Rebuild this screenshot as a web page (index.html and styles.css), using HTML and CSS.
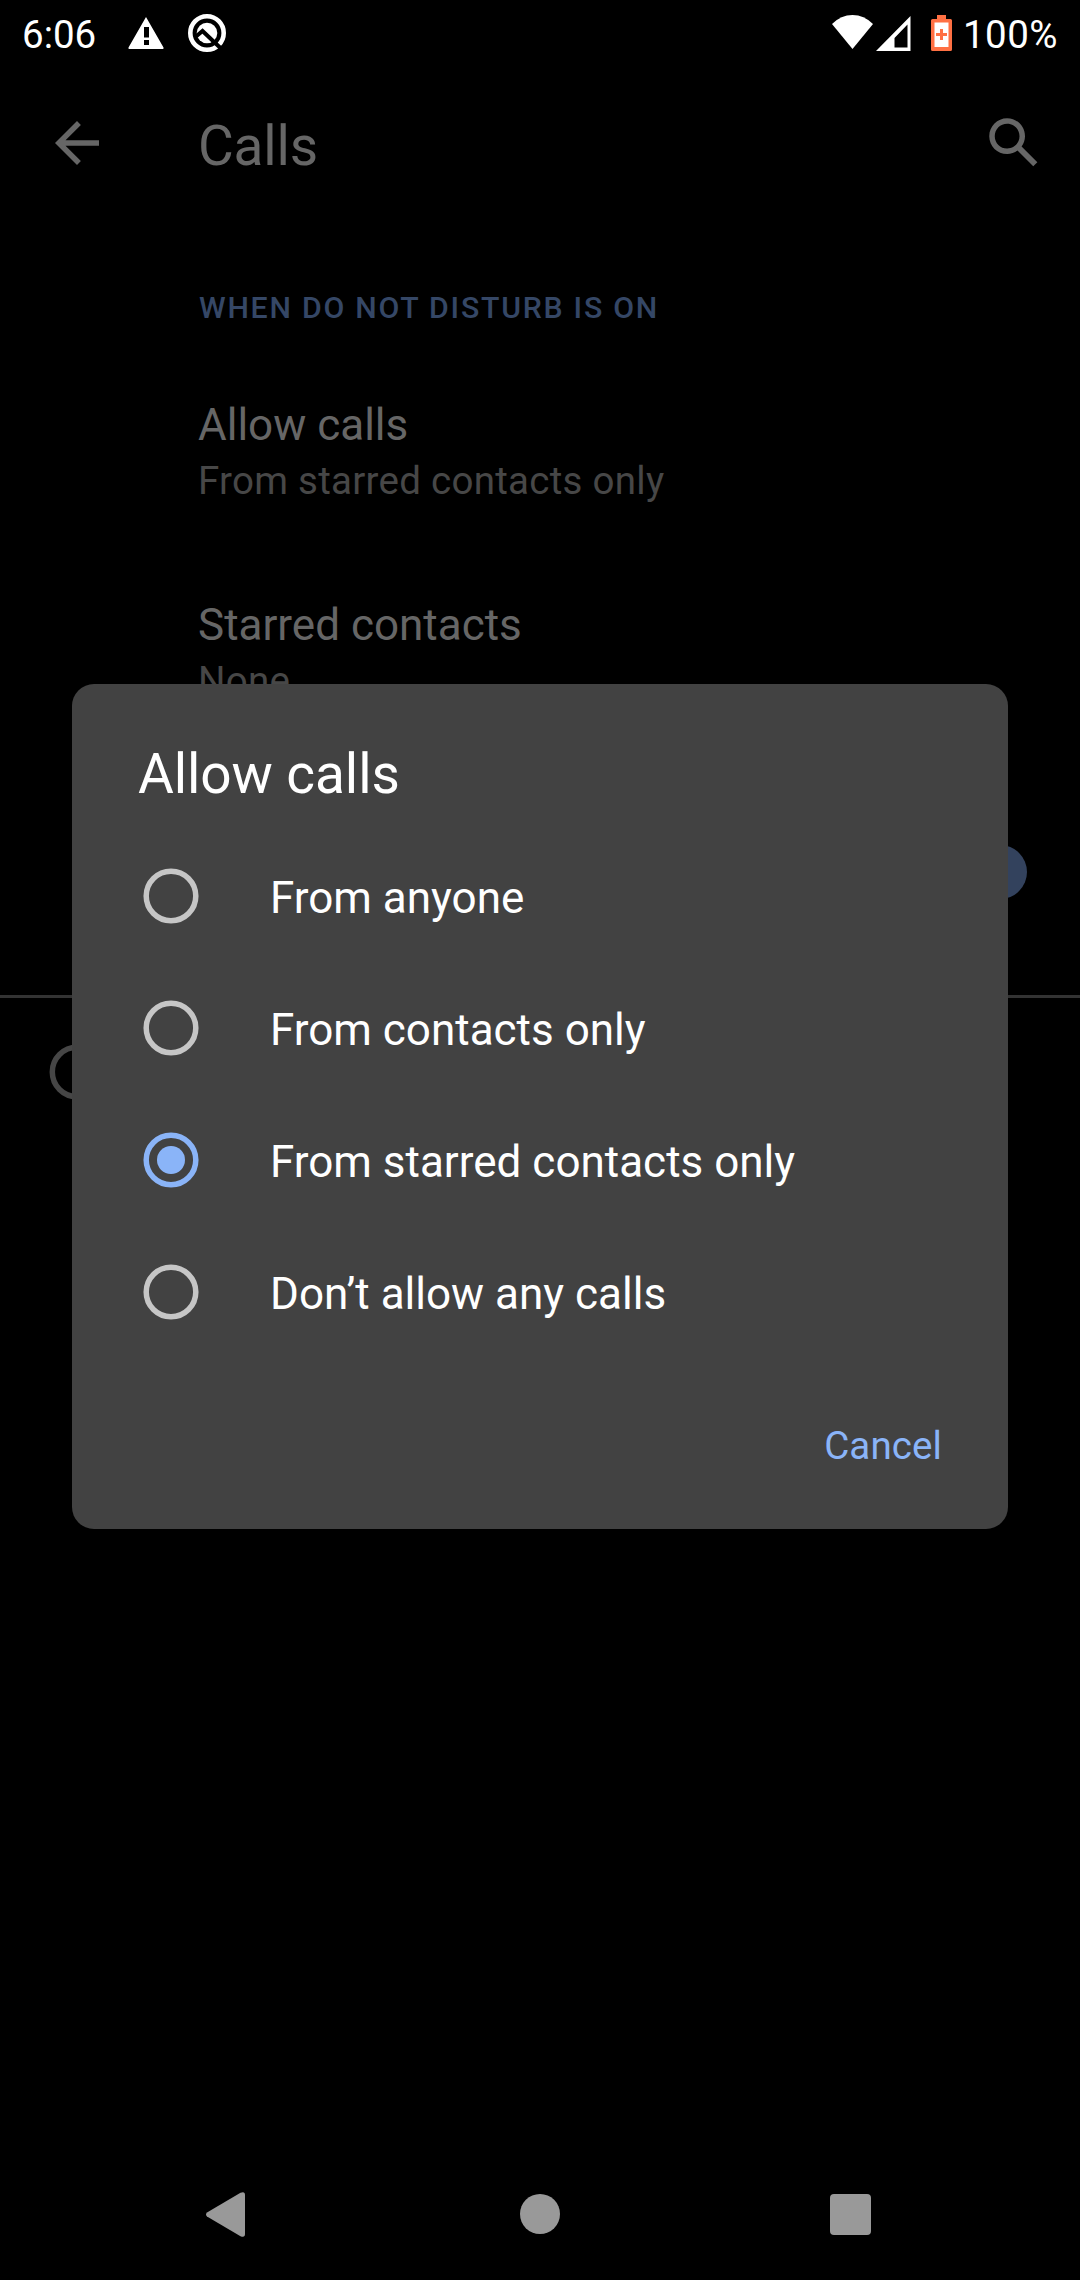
FILE: index.html
```html
<!DOCTYPE html>
<html lang="en">
<head>
<meta charset="utf-8">
<title>Calls</title>
<link rel="stylesheet" href="styles.css">
</head>
<body>
<div class="screen">
  <header class="status-bar">
    <span class="clock">6:06</span>
    <svg class="icon-warning" viewBox="0 0 36 32"><path fill="#fff" fill-rule="evenodd" d="M18 0 35.500 30.500Q36 32 34.500 32H1.500Q0 32 .5 30.500ZM16 10v10.500h5V10ZM16 23v5h5v-5Z"/></svg>
    <svg class="icon-q" viewBox="0 0 38 38">
      <circle cx="19" cy="19" r="16.700" fill="none" stroke="#fff" stroke-width="4.600"/>
      <circle cx="19" cy="19" r="10.300" fill="#fff"/>
      <path d="M8 22.500 14.500 17 33 34.500" fill="none" stroke="#000" stroke-width="4"/>
    </svg>
    <span class="spacer"></span>
    <svg class="icon-wifi" viewBox="0 0 41 34"><path fill="#fff" d="M0 9Q9 0 20.500 0T41 9L20.500 34Z"/></svg>
    <svg class="icon-signal" viewBox="0 0 35 35"><path fill="#fff" fill-rule="evenodd" d="M34.500 0V35H0ZM31.500 8.500 18.500 22V31.500H31.500Z"/></svg>
    <svg class="icon-battery" viewBox="0 0 21 36"><path fill="#ff7043" d="M6 0h9v4h4.500Q21 4 21 5.500V34.500Q21 36 19.500 36H1.500Q0 36 0 34.500V5.500Q0 4 1.500 4H6Z"/><path fill="#fff" d="M3.500 7.500h14v24.500h-14Z"/><path fill="#ff7043" d="M9 14h3v4h4v3h-4v4H9v-4H5v-3h4Z"/></svg>
    <span class="battery-level">100%</span>
  </header>

  <nav class="app-bar">
    <svg class="icon-action" viewBox="0 0 24 24"><path fill="#666" d="M20 11H7.830l5.590-5.590L12 4l-8 8 8 8 1.410-1.410L7.830 13H20v-2z"/></svg>
    <h1 class="page-title">Calls</h1>
    <svg class="icon-action" viewBox="0 0 24 24"><path fill="#666" d="M20.490 19l-5.730-5.730C15.530 12.200 16 10.910 16 9.500 16 5.910 13.090 3 9.500 3S3 5.910 3 9.500 5.910 16 9.500 16c1.410 0 2.700-.47 3.770-1.240L19 20.490 20.490 19zM5 9.500C5 7.010 7.010 5 9.500 5S14 7.010 14 9.500 11.990 14 9.500 14 5 11.990 5 9.500z"/></svg>
  </nav>

  <main class="settings">
    <h2 class="category">WHEN DO NOT DISTURB IS ON</h2>
    <section class="preference">
      <div class="preference-title">Allow calls</div>
      <div class="preference-summary">From starred contacts only</div>
    </section>
    <section class="preference">
      <div class="preference-title">Starred contacts</div>
      <div class="preference-summary">None</div>
    </section>
    <div class="switch-row"><span class="switch-thumb"></span></div>
    <div class="footer-row"><svg class="footer-icon" viewBox="0 0 56 56"><circle cx="28" cy="28" r="24.700"/></svg></div>
  </main>

  <footer class="nav-bar">
    <svg class="nav-back" viewBox="0 0 39 45"><path fill="#999" d="M1 20.500 34.500 .8Q39 -1 39 3V42Q39 46 34.500 44.200L1 24.500Q-1 22.500 1 20.500Z"/></svg>
    <span class="nav-home"></span>
    <span class="nav-recents"></span>
  </footer>

  <div class="dialog" role="dialog">
    <h2 class="dialog-title">Allow calls</h2>
    <div class="option"><svg class="radio" viewBox="0 0 56 56"><circle class="radio-ring" cx="28" cy="28" r="24.800"/></svg><span class="option-label">From anyone</span></div>
    <div class="option"><svg class="radio" viewBox="0 0 56 56"><circle class="radio-ring" cx="28" cy="28" r="24.800"/></svg><span class="option-label">From contacts only</span></div>
    <div class="option"><svg class="radio radio-checked" viewBox="0 0 56 56"><circle class="radio-ring" cx="28" cy="28" r="24.800"/><circle class="radio-dot" cx="28" cy="28" r="14"/></svg><span class="option-label">From starred contacts only</span></div>
    <div class="option"><svg class="radio" viewBox="0 0 56 56"><circle class="radio-ring" cx="28" cy="28" r="24.800"/></svg><span class="option-label">Don’t allow any calls</span></div>
    <div class="dialog-actions"><span class="dialog-button">Cancel</span></div>
  </div>
</div>
</body>
</html>
```
FILE: styles.css
```css
* { box-sizing: border-box; }

body {
  margin: 0;
  background: #000;
  font-family: Roboto, sans-serif;
}

h1, h2 { margin: 0; font-weight: 400; }

svg { display: block; flex: none; }

.screen {
  position: relative;
  display: flex;
  flex-direction: column;
  width: 1080px;
  height: 2280px;
  overflow: hidden;
  background: #000;
}

/* Status bar */
.status-bar {
  display: flex;
  align-items: center;
  height: 66px;
  padding: 0 22px;
  color: #fff;
  font-size: 38.5px;
  line-height: 48px;
}

.clock { width: 106px; padding-top: 4px; }
.icon-warning { width: 36px; height: 32px; }
.icon-q { width: 38px; height: 38px; margin-left: 24px; }
.spacer { flex: 1; }
.icon-wifi { width: 41px; height: 34px; margin: 0 3px 2px 0; }
.icon-signal { width: 35px; height: 35px; margin-right: 20px; }
.icon-battery { width: 21px; height: 36px; margin-right: 11px; }
.battery-level { padding-top: 4px; letter-spacing: 0.5px; }

/* App bar */
.app-bar {
  display: flex;
  align-items: center;
  height: 154px;
  padding: 0 33px 0 44px;
}

.icon-action { width: 66px; height: 66px; }

.page-title {
  flex: 1;
  padding: 6px 0 0 88px;
  color: #666;
  font-size: 55px;
  line-height: 66px;
  letter-spacing: -0.2px;
}

/* Settings list */
.settings { flex: 1; padding-top: 66px; }

.category {
  padding-left: 199px;
  color: #354766;
  font-size: 30.25px;
  font-weight: 500;
  line-height: 44px;
  letter-spacing: 1.75px;
}

.preference { height: 200px; padding: 65px 0 0 198px; }

.preference-title { color: #666; font-size: 44px; line-height: 60px; }

.preference-summary {
  color: #474747;
  font-size: 38.5px;
  line-height: 52px;
  letter-spacing: 0.27px;
}

.switch-row {
  display: flex;
  justify-content: flex-end;
  height: 268px;
  padding: 115px 53px 0 0;
  border-bottom: 3px solid #333;
}

.switch-thumb {
  width: 54px;
  height: 54px;
  border-radius: 50%;
  background: #33425d;
}

.footer-row { padding: 46px 0 0 49px; }

.footer-icon {
  width: 56px;
  height: 56px;
  fill: none;
  stroke: #464646;
  stroke-width: 5.5px;
}

/* Navigation bar */
.nav-bar {
  display: flex;
  align-items: center;
  height: 132px;
  padding: 0 209px 0 206px;
}

.nav-back { width: 39px; height: 45px; }

.nav-home {
  width: 40px;
  height: 40px;
  margin: 0 270px 0 275px;
  border-radius: 50%;
  background: #999;
}

.nav-recents { width: 41px; height: 41px; border-radius: 4px; background: #999; }

/* Choice dialog */
.dialog {
  position: absolute;
  top: 684px;
  left: 72px;
  width: 936px;
  height: 845px;
  padding: 57px 66px 0;
  border-radius: 22px;
  background: #424242;
  color: #fff;
}

.dialog-title {
  height: 89px;
  font-size: 55px;
  line-height: 66px;
  letter-spacing: -0.1px;
}

.option { display: flex; align-items: center; height: 132px; }

.radio {
  width: 56px;
  height: 56px;
  margin: 0 71px 0 5px;
}

.radio-ring { fill: none; stroke: #c6c6c6; stroke-width: 5.5px; }
.radio-checked .radio-ring { stroke: #8ab4f8; }
.radio-dot { fill: #8ab4f8; }

.option-label { padding-top: 3px; font-size: 44px; line-height: 60px; }

.dialog-actions {
  display: flex;
  justify-content: flex-end;
  padding-top: 64px;
  color: #8ab4f8;
  font-size: 38.5px;
  line-height: 48px;
}

.dialog-button { letter-spacing: 0.1px; }
```
